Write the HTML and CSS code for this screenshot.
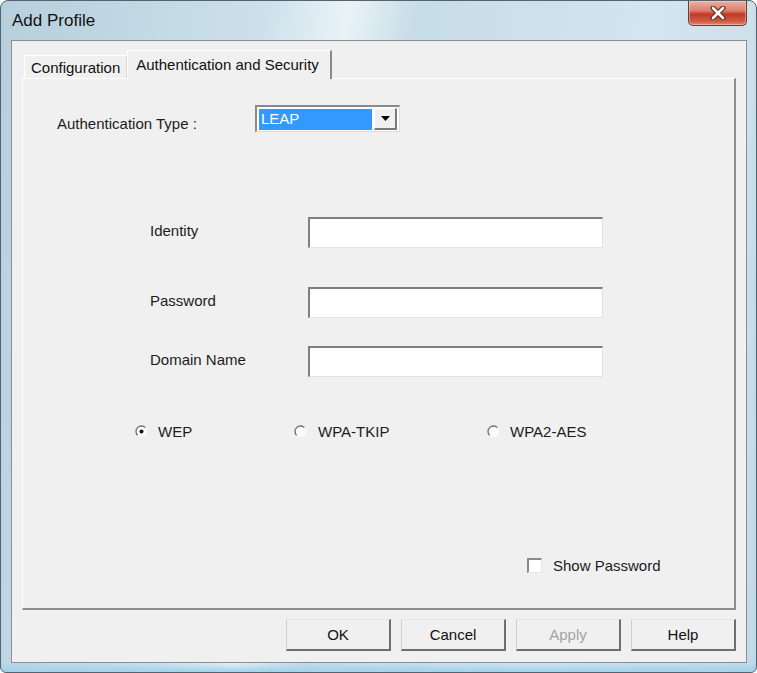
FILE: index.html
```html
<!DOCTYPE html>
<html lang="en">
<head>
  <meta charset="UTF-8" />
  <title>Add Profile</title>
  <link rel="stylesheet" href="styles.css">
</head>
<body>
<div class="window">
  <div class="titlebar">
    <span class="title">Add Profile</span>
    <span class="close">
      <svg width="20" height="14" viewBox="0 0 20 14">
        <path d="M5 2 L15 12 M15 2 L5 12" stroke="#6b2a20" stroke-width="5" stroke-linecap="round"/>
        <path d="M5 2 L15 12 M15 2 L5 12" stroke="#fff" stroke-width="2.6" stroke-linecap="round"/>
      </svg>
    </span>
  </div>

  <div class="client">
    <div class="tabs">
      <div class="tab">Configuration</div>
      <div class="tab active">Authentication and Security</div>
    </div>

    <div class="panel">
      <div class="auth-row">
        <span class="auth-label">Authentication Type :</span>
        <div class="combo">
          <span class="combo-value">LEAP</span>
          <span class="combo-btn">
            <svg width="9" height="5" viewBox="0 0 9 5"><path d="M0 0 H9 L4.5 5 Z" fill="#000"/></svg>
          </span>
        </div>
      </div>

      <div class="field first">
        <span class="field-label">Identity</span>
        <div class="textbox"></div>
      </div>
      <div class="field pw">
        <span class="field-label">Password</span>
        <div class="textbox"></div>
      </div>
      <div class="field dom">
        <span class="field-label">Domain Name</span>
        <div class="textbox"></div>
      </div>

      <div class="radios">
        <label class="radio r1">
          <svg width="13" height="13" viewBox="0 0 13 13">
            <circle cx="6.5" cy="6.5" r="5.5" fill="#fbfbfb"/>
            <path d="M10.4 2.6 A5.5 5.5 0 0 0 2.6 10.4" fill="none" stroke="#6d6d6d" stroke-width="1.3"/>
            <circle cx="6.5" cy="6.5" r="2" fill="#111"/>
          </svg>
          <span>WEP</span>
        </label>
        <label class="radio r2">
          <svg width="13" height="13" viewBox="0 0 13 13">
            <circle cx="6.5" cy="6.5" r="5.5" fill="#fbfbfb"/>
            <path d="M10.4 2.6 A5.5 5.5 0 0 0 2.6 10.4" fill="none" stroke="#6d6d6d" stroke-width="1.3"/>
          </svg>
          <span>WPA-TKIP</span>
        </label>
        <label class="radio r3">
          <svg width="13" height="13" viewBox="0 0 13 13">
            <circle cx="6.5" cy="6.5" r="5.5" fill="#fbfbfb"/>
            <path d="M10.4 2.6 A5.5 5.5 0 0 0 2.6 10.4" fill="none" stroke="#6d6d6d" stroke-width="1.3"/>
          </svg>
          <span>WPA2-AES</span>
        </label>
      </div>

      <label class="check">
        <span class="box"></span>
        <span>Show Password</span>
      </label>
    </div>

    <div class="buttons">
      <div class="btn">OK</div>
      <div class="btn">Cancel</div>
      <div class="btn disabled">Apply</div>
      <div class="btn">Help</div>
    </div>
  </div>
</div>
</body>
</html>
```

FILE: styles.css
```css
*{box-sizing:border-box}
body{margin:0;background:#fff;font-family:"Liberation Sans",Arial,sans-serif;color:#1c1c1c}

.window{width:757px;height:673px;border:1px solid #56636e;border-radius:8px 8px 6px 6px;
        background:linear-gradient(100deg,#b7cfdc 0%,#cbe0ea 30%,#e9f3f7 40%,#c6dce7 48%,#d3e6ef 75%,#c3dbe6 100%);
        box-shadow:inset 0 -7px 6px -2px #9fd3eb;display:flex;flex-direction:column;overflow:hidden}

.titlebar{height:40px;display:flex;justify-content:space-between;align-items:flex-start;padding:0 9px 0 11px}
.title{margin-top:10px;font-size:17px;line-height:20px;color:#111}
.close{width:59px;height:25px;display:flex;align-items:center;justify-content:center;
       border:1px solid #6a3a32;border-top:none;border-radius:0 0 5px 5px;
       background:linear-gradient(#e9b1a4 0%,#d9806e 40%,#c23a26 55%,#cf5c45 85%,#e38a74 100%);
       box-shadow:inset 0 0 0 1px rgba(255,220,210,.45)}

.client{flex:1;margin:0 9px 9px 10px;border:1px solid #8a8f94;background:#f0f0f0;
        padding:9px 10px 11px 10px;display:flex;flex-direction:column}

.tabs{height:28px;display:flex;align-items:flex-end;padding-left:2px;font-size:15px}
.tab{height:23px;padding:3px 6px 0 6px;border-top:1px solid #fff;border-left:1px solid #fff;
     border-right:1px solid #d6d6d6;background:#f0f0f0;color:#111}
.tab.active{height:29px;margin-bottom:-1px;padding:5px 11px 0 8px;border-right:2px solid #8a8a8a;
            position:relative;z-index:1}

.panel{height:532px;border-top:1px solid #fff;border-left:1px solid #fff;
       border-right:2px solid #8d8d8d;border-bottom:2px solid #8d8d8d;font-size:15px;
       display:flex;flex-direction:column;align-items:flex-start}

.auth-row{display:flex;align-items:flex-start;margin:26px 0 0 34px}
.auth-label{width:198px;padding-top:10px;line-height:17px}
.combo{width:145px;height:27px;display:flex;align-items:center;padding:2px;
       border-top:2px solid #8a8a8a;border-left:2px solid #8a8a8a;
       border-right:1px solid #dcdcdc;border-bottom:1px solid #dcdcdc;background:#fff}
.combo-value{flex:1;height:21px;background:#3399ff;color:#fff;padding:1px 0 0 2px;line-height:18px}
.combo-btn{width:23px;height:22px;margin-left:2px;display:flex;align-items:center;justify-content:center;
           background:#f0f0f0;border-top:1px solid #fff;border-left:1px solid #fff;
           border-right:2px solid #7a7a7a;border-bottom:2px solid #7a7a7a}

.field{display:flex;align-items:flex-start;margin-left:127px}
.field.first{margin-top:85px}
.field.pw{margin-top:39px}
.field.dom{margin-top:28px}
.field-label{width:158px;padding-top:5px;line-height:17px}
.textbox{width:295px;height:31px;background:#fff;border-top:2px solid #7f7f7f;border-left:2px solid #7f7f7f;
         border-right:1px solid #e2e2e2;border-bottom:1px solid #e2e2e2}

.radios{display:flex;margin:46px 0 0 112px}
.radio{display:flex;align-items:center;gap:10px;line-height:17px}
.r1{width:159px}
.r2{width:193px;gap:11px}
.r3{gap:10px}

.check{display:flex;align-items:center;gap:11px;margin:117px 0 0 504px}
.box{width:15px;height:15px;background:#fff;border-top:2px solid #8a8a8a;border-left:2px solid #8a8a8a;
     border-right:1px solid #e6e6e6;border-bottom:1px solid #e6e6e6}

.buttons{display:flex;justify-content:flex-end;gap:10px;margin-top:9px}
.btn{width:105px;height:32px;display:flex;align-items:center;justify-content:center;font-size:15px;
     background:#f0f0f0;border-top:1px solid #e4e4e4;border-left:1px solid #d0d0d0;
     border-right:2px solid #6e6e6e;border-bottom:2px solid #6e6e6e;color:#111}
.btn.disabled{color:#a3a3a3}
```
